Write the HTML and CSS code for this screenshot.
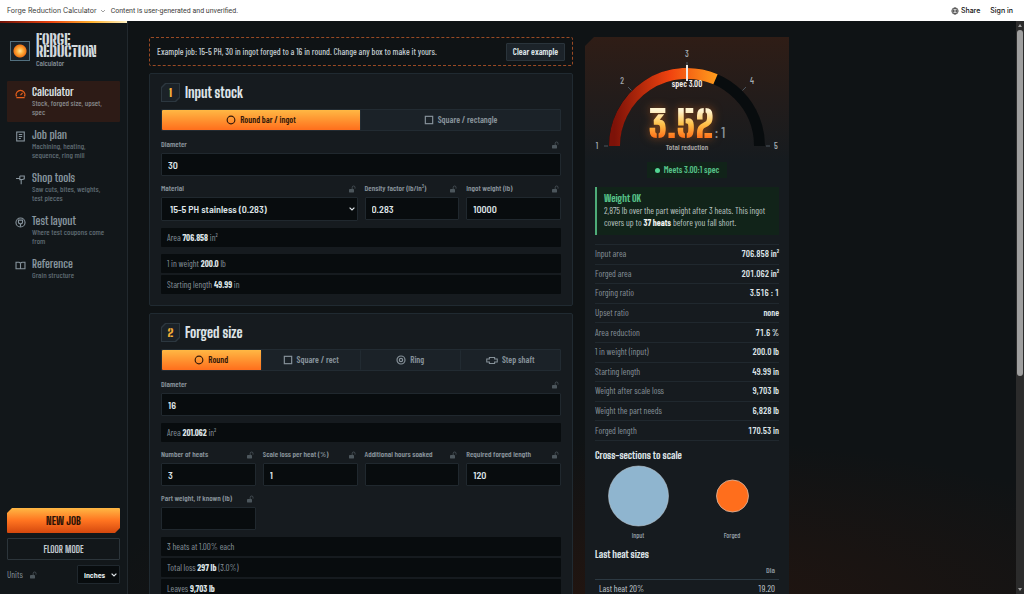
FILE: index.html
```html
<!DOCTYPE html>
<html lang="en">
<head>
<meta charset="utf-8">
<meta name="viewport" content="width=device-width, initial-scale=1">
<title>Forge Reduction Calculator</title>
<link rel="stylesheet" href="styles.css">
</head>
<body>
<svg class="defs" width="0" height="0" aria-hidden="true">
  <symbol id="lock" viewBox="0 0 8 8"><rect x="1" y="4" width="5" height="3.4" rx=".4" fill="currentColor"/><path d="M4.2 4V2.4a1.4 1.4 0 0 1 2.8 0V3.6" fill="none" stroke="currentColor" stroke-width=".8"/></symbol>
</svg>
<header class="topbar">
  <button class="topbar-title" type="button">Forge Reduction Calculator
    <svg width="6" height="6" viewBox="0 0 6 6"><path d="M1 2l2 2 2-2" fill="none" stroke="currentColor" stroke-width=".7"/></svg>
  </button>
  <span class="topbar-note">Content is user-generated and unverified.</span>
  <button class="topbar-btn" type="button">
    <svg width="8" height="8" viewBox="0 0 16 16" fill="none" stroke="currentColor" stroke-width="1.3"><circle cx="8" cy="8" r="6.3"/><ellipse cx="8" cy="8" rx="2.8" ry="6.3"/><path d="M1.7 8h12.6"/></svg>Share</button>
  <button class="topbar-btn" type="button">Sign in</button>
</header>
<div class="app">
  <aside class="sidebar">
    <div class="brand">
      <span class="brand-mark"></span>
      <div>
        <div class="brand-name">FORGE<br>REDUCTION</div>
        <div class="brand-sub">Calculator</div>
      </div>
    </div>
    <nav class="nav">
      <a class="nav-item active" href="#calculator">
        <svg viewBox="0 0 16 16"><path d="M3 11.500H1.700a6.500 6.500 0 1 1 12.600 0H13M8 10.500l3-3.500M2 14h12"/></svg>
        <span><b>Calculator</b><small>Stock, forged size, upset, spec</small></span></a>
      <a class="nav-item" href="#plan">
        <svg viewBox="0 0 16 16"><rect x="2.500" y="1.500" width="11" height="13"/><path d="M5.500 5h5M5.500 8h5M5.500 11h3"/></svg>
        <span><b>Job plan</b><small>Machining, heating, sequence, ring mill</small></span></a>
      <a class="nav-item" href="#tools">
        <svg viewBox="0 0 16 16"><path d="M1.500 6.500h5.500M7 3v6M7 3h6.500v4L11 8H7M9 8v7"/></svg>
        <span><b>Shop tools</b><small>Saw cuts, bites, weights, test pieces</small></span></a>
      <a class="nav-item" href="#test">
        <svg viewBox="0 0 16 16"><circle cx="8" cy="8" r="6.6"/><path d="M8 14V9.500M5 4.500h6v2.300a3 3 0 0 1-6 0z"/></svg>
        <span><b>Test layout</b><small>Where test coupons come from</small></span></a>
      <a class="nav-item" href="#reference">
        <svg viewBox="0 0 16 16"><path d="M8 4v9M1.500 3.200h4.300L8 4.400l2.200-1.200h4.300v9.600H1.500z"/></svg>
        <span><b>Reference</b><small>Grain structure</small></span></a>
    </nav>
    <div class="side-foot">
      <button class="new-job" type="button">NEW JOB</button>
      <button class="floor" type="button">FLOOR MODE</button>
      <div class="units">
        <label for="units">Units</label>
        <svg class="lock"><use href="#lock"/></svg>
        <select id="units"><option>inches</option></select>
      </div>
    </div>
  </aside>

  <main class="content">
    <div class="columns">
      <div class="forms">
        <div class="notice">
          <span>Example job: 15-5 PH, 30 in ingot forged to a 16 in round. Change any box to make it yours.</span>
          <button type="button">Clear example</button>
        </div>

        <section class="card">
          <h2><span class="step"><i>1</i></span>Input stock</h2>
          <div class="seg">
            <button class="on" type="button"><svg viewBox="0 0 12 12"><circle cx="6" cy="6" r="4.6"/></svg>Round bar / ingot</button>
            <button type="button"><svg viewBox="0 0 12 12"><rect x="1.6" y="1.6" width="8.8" height="8.8"/></svg>Square / rectangle</button>
          </div>
          <div class="fields">
            <div class="field full"><label for="d1">Diameter</label><svg class="lock"><use href="#lock"/></svg><input id="d1" value="30"></div>
            <div class="field two"><label for="mat">Material</label><svg class="lock"><use href="#lock"/></svg><select id="mat"><option>15-5 PH stainless (0.283)</option></select></div>
            <div class="field"><label for="den">Density factor (lb/in³)</label><svg class="lock"><use href="#lock"/></svg><input id="den" value="0.283"></div>
            <div class="field"><label for="wt">Ingot weight (lb)</label><svg class="lock"><use href="#lock"/></svg><input id="wt" value="10000"></div>
          </div>
          <div class="outs"><p>Area <b>706.858</b> in²</p></div>
          <div class="outs"><p>1 in weight <b>200.0</b> lb</p><p>Starting length <b>49.99</b> in</p></div>
        </section>

        <section class="card">
          <h2><span class="step"><i>2</i></span>Forged size</h2>
          <div class="seg">
            <button class="on" type="button"><svg viewBox="0 0 12 12"><circle cx="6" cy="6" r="4.6"/></svg>Round</button>
            <button type="button"><svg viewBox="0 0 12 12"><rect x="1.6" y="1.6" width="8.8" height="8.8"/></svg>Square / rect</button>
            <button type="button"><svg viewBox="0 0 12 12"><circle cx="6" cy="6" r="4.8"/><circle cx="6" cy="6" r="2"/></svg>Ring</button>
            <button type="button"><svg class="wide" viewBox="0 0 16 12"><path d="M1 4h3.500V2h7v2H15v4h-3.500v2h-7V8H1z"/></svg>Step shaft</button>
          </div>
          <div class="fields">
            <div class="field full"><label for="d2">Diameter</label><svg class="lock"><use href="#lock"/></svg><input id="d2" value="16"></div>
          </div>
          <div class="outs"><p>Area <b>201.062</b> in²</p></div>
          <div class="fields">
            <div class="field"><label for="heats">Number of heats</label><svg class="lock"><use href="#lock"/></svg><input id="heats" value="3"></div>
            <div class="field"><label for="scale">Scale loss per heat (%)</label><svg class="lock"><use href="#lock"/></svg><input id="scale" value="1"></div>
            <div class="field"><label for="soak">Additional hours soaked</label><svg class="lock"><use href="#lock"/></svg><input id="soak"></div>
            <div class="field"><label for="len">Required forged length</label><svg class="lock"><use href="#lock"/></svg><input id="len" value="120"></div>
            <div class="field"><label for="part">Part weight, if known (lb)</label><svg class="lock"><use href="#lock"/></svg><input id="part"></div>
          </div>
          <div class="outs"><p>3 heats at 1.00% each</p><p>Total loss <b>297 lb</b> (3.0%)</p><p>Leaves <b>9,703 lb</b></p></div>
        </section>
      </div>

      <section class="results">
        <svg class="gauge" viewBox="0 0 184 108">
          <defs>
            <linearGradient id="heat" x1="0" x2="1"><stop offset="0" stop-color="#7d1208"/><stop offset=".55" stop-color="#f0430f"/><stop offset="1" stop-color="#ff9a1c"/></linearGradient>
            <linearGradient id="molten" x1="0" y1="0" x2="0" y2="1"><stop offset=".2" stop-color="#fff3cf"/><stop offset=".5" stop-color="#ffc24a"/><stop offset=".8" stop-color="#ff741c"/></linearGradient>
          </defs>
          <path d="M19.500 99a72.500 72.500 0 0 1 145 0" fill="none" stroke="#080c0e" stroke-width="11"/>
          <path d="M19.500 99A72.500 72.500 0 0 1 120.500 32.300" fill="none" stroke="url(#heat)" stroke-width="11"/>
          <path d="M9 99h4M36.500 43.500l-3.500-3.500M147.500 43.500l3.500-3.500M171 99h4M92 18v-3" stroke="#4c565e" fill="none"/>
          <path d="M92 18v16" stroke="#f1ece8" stroke-width="2"/>
          <g class="gauge-num"><text x="2" y="102">1</text><text x="27" y="37">2</text><text x="92" y="10">3</text><text x="157" y="37">4</text><text x="181" y="102">5</text></g>
          <text class="gauge-spec" x="92" y="40">spec 3.00</text>
          <text class="gauge-value" x="86" y="91">3.52</text>
          <text class="gauge-one" x="125" y="91">: 1</text>
          <text class="gauge-cap" x="92" y="103">Total reduction</text>
        </svg>
        <div class="pill">Meets 3.00:1 spec</div>
        <div class="alert">
          <h3>Weight OK</h3>
          <p>2,875 lb over the part weight after 3 heats. This ingot covers up to <b>37 heats</b> before you fall short.</p>
        </div>
        <table class="facts">
          <tr><th>Input area</th><td>706.858 in²</td></tr>
          <tr><th>Forged area</th><td>201.062 in²</td></tr>
          <tr><th>Forging ratio</th><td>3.516 : 1</td></tr>
          <tr><th>Upset ratio</th><td>none</td></tr>
          <tr><th>Area reduction</th><td>71.6 %</td></tr>
          <tr><th>1 in weight (input)</th><td>200.0 lb</td></tr>
          <tr><th>Starting length</th><td>49.99 in</td></tr>
          <tr><th>Weight after scale loss</th><td>9,703 lb</td></tr>
          <tr><th>Weight the part needs</th><td>6,828 lb</td></tr>
          <tr><th>Forged length</th><td>170.53 in</td></tr>
        </table>
        <h3 class="sub">Cross-sections to scale</h3>
        <svg class="sections" viewBox="0 0 184 78">
          <circle cx="43.500" cy="34" r="30" fill="#8fb5cf" stroke="#b9c5cc" stroke-width=".6"/>
          <circle cx="137.500" cy="34" r="16" fill="#ff6e1c" stroke="#d8b8a4" stroke-width=".8"/>
          <text x="43" y="76">Input</text><text x="137" y="76">Forged</text>
        </svg>
        <h3 class="sub">Last heat sizes</h3>
        <table class="heats">
          <thead><tr><th></th><th>Dia</th></tr></thead>
          <tbody><tr><td>Last heat 20%</td><td>19.20</td></tr></tbody>
        </table>
      </section>
    </div>
  </main>
  <div class="scroll" aria-hidden="true"><i class="up"></i><i class="thumb"></i><i class="down"></i></div>
</div>
</body>
</html>
```
FILE: styles.css
```css
* { box-sizing: border-box; }
:root {
  --semi: "Barlow Semi Condensed", "Roboto Condensed", "Liberation Sans Narrow", "Roboto", sans-serif;
  --cond: "Barlow Condensed", "Barlow Semi Condensed", "Liberation Sans Narrow", sans-serif;
  --head: "Big Shoulders Display", "Big Shoulders Text", "Big Shoulders", "Barlow Condensed", "Liberation Sans Narrow", sans-serif;
  --stencil: "Big Shoulders Stencil Display", "Big Shoulders Stencil Text", "Big Shoulders Stencil", "Big Shoulders Display", "Barlow Condensed", "Liberation Sans Narrow", sans-serif;
  --line: #20282e;
  --dim: #87929a;
  --well: #080c0e;
}
body {
  margin: 0;
  height: 100vh;
  display: flex;
  flex-direction: column;
  overflow: hidden;
  background: #0f1315;
  color: #dde3e7;
  font: 9px/12px var(--cond);
}
button, input, select { font: inherit; color: inherit; margin: 0; border-radius: 1px; }
h2, h3, p { margin: 0; }
.defs { position: absolute; }

.topbar {
  height: 21px;
  flex: none;
  display: flex;
  align-items: center;
  gap: 2px;
  padding: 0 7px;
  background: #fff;
  color: #3c3c3a;
  font: 7px/12px Inter, sans-serif;
}
.topbar button { background: none; border: 0; padding: 0; display: flex; align-items: center; gap: 3px; }
.topbar-title svg { color: #777; }
.topbar-note { margin: 0 auto 0 3px; font-family: Roboto, sans-serif; }
.topbar .topbar-btn { padding: 0 4px; gap: 2px; font-weight: 500; color: #111; }

.app { flex: 1; min-height: 0; display: grid; grid-template-columns: 128px minmax(0, 1fr) 8px; }

.sidebar {
  position: relative;
  display: flex;
  flex-direction: column;
  padding: 12px 7px 10px;
  background: #12171a;
  border-right: 1px solid #22292e;
}
.sidebar::before {
  content: "";
  position: absolute;
  inset: 0 0 auto;
  height: 2px;
  background: linear-gradient(90deg, #6e1208, #e8430f 40%, #ffb02e 72%, #fff0c0);
}
.brand { display: flex; align-items: center; gap: 6px; padding-left: 3px; }
.brand-mark {
  width: 20px;
  height: 20px;
  border: 1px solid #52707f;
  background: radial-gradient(circle at 50% 50%, #ffe3a0 0, #ffb03c 3px, #f07818 6px, #1a2228 7px);
}
.brand-name { font: 900 15px/12px var(--stencil); color: #d2d9de; }
.brand-sub { font: 500 8px/12px var(--cond); color: var(--dim); }
.nav { display: flex; flex-direction: column; gap: 2px; margin-top: 12px; }
.nav-item {
  display: flex;
  gap: 6px;
  min-height: 41px;
  padding: 4px 12px 4px 8px;
  border-radius: 1px;
  color: #87949d;
  text-decoration: none;
}
.nav-item svg { width: 11px; height: 11px; margin-top: 3px; flex: none; fill: none; stroke: currentColor; stroke-width: 1.6; }
.nav-item b { display: block; font: 700 12px/14px var(--head); }
.nav-item small { display: block; font: 500 8px/9px var(--cond); color: #5f6b73; }
.nav-item.active { background: #2d1b16; color: #dfe3e5; }
.nav-item.active svg { color: #e8601c; }
.nav-item.active small { color: #87898b; }

.side-foot { margin-top: auto; display: grid; gap: 5px; }
.new-job {
  height: 25px;
  border: 0;
  background: linear-gradient(#ffb844, #ff7420 50%, #d4480e);
  clip-path: polygon(5px 0, 100% 0, 100% calc(100% - 5px), calc(100% - 5px) 100%, 0 100%, 0 5px);
  color: #2a1206;
  font: 800 11px/14px var(--head);
}
.floor { height: 22px; background: #12171a; border: 1px solid #2c353b; color: #c4ccd2; font: 700 10px/12px var(--head); }
.units { display: flex; align-items: center; color: var(--dim); }
.units .lock { margin-left: 6px; }
select {
  appearance: none;
  background: var(--well) url("data:image/svg+xml,%3Csvg xmlns='http://www.w3.org/2000/svg' viewBox='0 0 6 4'%3E%3Cpath d='M.6.6 3 3 5.400.6' fill='none' stroke='%23dde3e7' stroke-width='1.200'/%3E%3C/svg%3E") no-repeat right 2px center / 6px 4px;
  border: 1px solid var(--line);
  color: #dde3e7;
}
.units select {
  margin-left: auto;
  width: 43px;
  height: 19px;
  padding: 0 6px;
  font: 700 8px/12px var(--semi);
}
.lock { width: 8px; height: 8px; color: #4c565c; }

.content {
  overflow: hidden;
  padding: 16px 21px 0;
  background: radial-gradient(ellipse 560px 180px at 58% 104%, #24150f, transparent);
}
.columns { display: grid; grid-template-columns: minmax(0, 1fr) 204px; gap: 12px; max-width: 640px; align-items: start; }
.forms { display: grid; gap: 7px; }
.notice {
  display: flex;
  align-items: center;
  justify-content: space-between;
  height: 29px;
  padding: 0 7px;
  border: 1px dashed #9a4a24;
  border-radius: 2px;
  color: #bfc6cb;
  font-weight: 500;
}
.notice button { height: 18px; width: 59px; padding: 0; background: #1c2329; border: 1px solid #2a343b; color: #dde3e7; font-weight: 600; }
.card { padding: 9px 11px 11px; background: #161b1f; border: 1px solid #202a31; border-radius: 2px; }
.card h2 { display: flex; align-items: center; gap: 5px; font: 800 14px/19px var(--head); }
.step {
  width: 19px;
  height: 19px;
  padding: 1px;
  background: #2c373f;
  clip-path: polygon(4px 0, 100% 0, 100% calc(100% - 4px), calc(100% - 4px) 100%, 0 100%, 0 4px);
}
.step i {
  display: block;
  height: 17px;
  background: #1b2228;
  clip-path: polygon(4px 0, 100% 0, 100% calc(100% - 4px), calc(100% - 4px) 100%, 0 100%, 0 4px);
  color: #f3ae37;
  font: 900 12px/17px var(--stencil);
  text-align: center;
}
.seg { display: grid; grid-auto-flow: column; grid-auto-columns: 1fr; height: 22px; margin-top: 7px; border: 1px solid #222b32; border-radius: 1px; background: #1b2228; }
.seg button {
  display: flex;
  align-items: center;
  justify-content: center;
  gap: 4px;
  border: 0;
  border-right: 1px solid #222b32;
  background: none;
  color: #87929a;
  padding: 0;
  font: 600 9px/12px var(--cond);
}
.seg button:last-child { border: 0; }
.seg .on { background: linear-gradient(#ffb844, #ff6e1c); color: #34190a; }
.seg svg { width: 10px; height: 10px; fill: none; stroke: currentColor; stroke-width: 1.4; }
.seg .wide { width: 12px; height: 9px; }
.fields { display: grid; grid-template-columns: repeat(4, minmax(0, 1fr)); gap: 7px; margin-top: 8px; align-items: start; }
.outs + .fields { margin-top: 7px; }
.field { display: grid; grid-template-columns: minmax(0, 1fr) 8px; align-items: center; row-gap: 3px; }
.field label { font: 600 8px/11px var(--cond); color: #87929a; white-space: nowrap; }
.field .lock { justify-self: end; margin-right: 2px; }
.field input, .field select {
  grid-column: 1 / -1;
  width: 100%;
  height: 23px;
  padding: 0 6px;
  border: 1px solid var(--line);
  background-color: var(--well);
  color: #dde3e7;
  font: 600 10px/12px var(--semi);
}
.field select { height: 24px; padding: 0 8px; }
.full { grid-column: 1 / -1; }
.two { grid-column: span 2; }
.outs { display: grid; gap: 2px; margin-top: 7px; }
.outs p { height: 19px; padding: 0 6px; line-height: 19px; background: var(--well); border-radius: 1px; color: var(--dim); }
.outs b { color: #dde3e7; }

.results {
  padding: 10px 10px 0;
  background: linear-gradient(#2f1d16, #161b1f 124px);
  clip-path: polygon(9px 0, 100% 0, 100% 100%, 0 100%, 0 9px);
}
.gauge, .sections { display: block; width: 100%; height: auto; }
.gauge text, .sections text { text-anchor: middle; }
.gauge-num { font: 500 9px var(--cond); fill: #a5adb2; }
.gauge-spec { font: 600 9px var(--cond); fill: #f1ece8; }
.gauge-value { font: 900 37px var(--stencil); fill: url(#molten); filter: drop-shadow(0 0 5px #ff7a1c88); }
.gauge-one { font: 500 15px var(--cond); fill: #87929a; }
.gauge-cap { font: 600 8px var(--cond); fill: #a5a3a2; }
.pill {
  display: flex;
  align-items: center;
  gap: 4px;
  width: fit-content;
  height: 16px;
  margin: 7px auto 9px;
  padding: 0 8px;
  background: #112319;
  color: #56c288;
  font-weight: 600;
}
.pill::before { content: ""; width: 5px; height: 5px; border-radius: 50%; background: #52d492; }
.alert { height: 48px; padding: 5px 7px; border-left: 2px solid #4eab78; background: #112319; color: #bcc6c3; }
.alert h3 { font: 800 10px/13px var(--head); color: #56c288; }
.alert b { color: #edf1f0; }
.facts, .heats { width: 100%; border-collapse: collapse; }
.facts { height: 197px; margin-top: 9px; border-top: 1px solid var(--line); }
.facts tr { border-bottom: 1px solid var(--line); }
.facts th, .facts td { padding: 0; text-align: left; font-weight: 400; color: #87929a; }
.facts td { text-align: right; font-weight: 600; color: #dde3e7; }
td { font-variant-numeric: tabular-nums; }
.sub { margin-top: 8px; font: 800 10px/13px var(--head); }
.sections text { font: 500 7px var(--cond); fill: #9aa4aa; }
.heats th, .heats td { padding: 3px 4px; text-align: right; font-weight: 400; line-height: 11px; color: #c4ccd2; }
.heats th { font-size: 8px; font-weight: 600; line-height: 12px; border-bottom: 1px solid #2c3942; color: #87929a; }
.heats td:first-child { text-align: left; }

.scroll { display: flex; flex-direction: column; align-items: center; background: #2b2b2b; padding: 3px 0; }
.scroll .thumb { width: 6px; flex: 0 1 61%; margin: 3px 0 auto; border-radius: 3px; background: #9f9f9f; }
.scroll .up, .scroll .down { border: 2px solid transparent; }
.scroll .up { border-top: 0; border-bottom: 3px solid #9f9f9f; }
.scroll .down { border-bottom: 0; border-top: 3px solid #9f9f9f; }
```
